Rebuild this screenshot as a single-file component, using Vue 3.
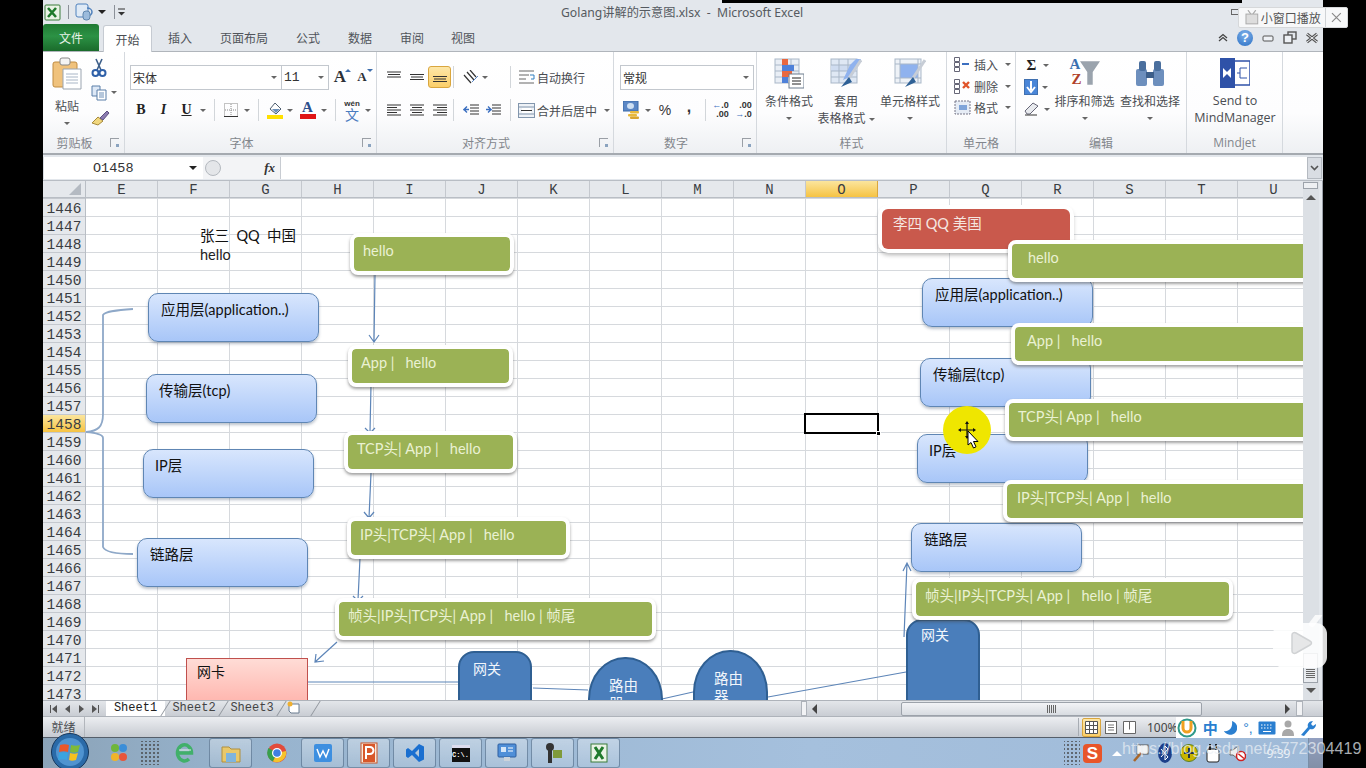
<script setup>
const docTitle = 'Golang讲解的示意图.xlsx  -  Microsoft Excel'
const noteTitle = '张三  QQ  中国'
const cols = ['E','F','G','H','I','J','K','L','M','N','O','P','Q','R','S','T','U']
const rows = Array.from({ length: 28 }, (_, i) => 1446 + i)
const tabs = [
  { t: '插入', w: 56 }, { t: '页面布局', w: 72 }, { t: '公式', w: 56 },
  { t: '数据', w: 48 }, { t: '审阅', w: 56 }, { t: '视图', w: 46 }
]
const layers = [
  { t: '应用层(application..)', x: 148, y: 293, px: 12 },
  { t: '传输层(tcp)', x: 146, y: 374, px: 12 },
  { t: 'IP层', x: 143, y: 449, px: 11 },
  { t: '链路层', x: 137, y: 538, px: 12 },
  { t: '应用层(application..)', x: 922, y: 278, px: 12 },
  { t: '传输层(tcp)', x: 920, y: 358, px: 12 },
  { t: 'IP层', x: 917, y: 434, px: 11 },
  { t: '链路层', x: 911, y: 523, px: 12 }
]
const greens = [
  { t: 'hello', x: 354, y: 237, w: 156, p: 9 },
  { t: 'App |   hello', x: 352, y: 349, w: 157, p: 9 },
  { t: 'TCP头| App |   hello', x: 348, y: 435, w: 165, p: 9 },
  { t: 'IP头|TCP头| App |   hello', x: 351, y: 521, w: 215, p: 9 },
  { t: '帧头|IP头|TCP头| App |   hello | 帧尾', x: 339, y: 602, w: 313, p: 9 },
  { t: 'hello', x: 1012, y: 244, w: 320, p: 16 },
  { t: 'App |   hello', x: 1015, y: 327, w: 320, p: 12 },
  { t: 'TCP头| App |   hello', x: 1009, y: 403, w: 320, p: 9 },
  { t: 'IP头|TCP头| App |   hello', x: 1007, y: 484, w: 320, p: 10 },
  { t: '帧头|IP头|TCP头| App |   hello | 帧尾', x: 916, y: 582, w: 313, p: 9 }
]
const place = (x, y, w, h) => ({
  left: x - 86 + 'px', top: y - 198 + 'px',
  ...(w ? { width: w + 'px' } : {}), ...(h ? { height: h + 'px' } : {})
})
const greenBox = g => ({ ...place(g.x - 4, g.y - 4, g.w + 8), paddingLeft: g.p + 'px' })
</script>

<template>
  <div class="screen">
    <div class="win">
      <!-- title bar -->
      <div class="titlebar">
        <div class="qat">
          <svg width="18" height="17" viewBox="0 0 18 17"><rect x="1" y="1" width="15" height="15" rx="1" fill="#eaf3e6" stroke="#3a7d3a"/><path d="M4 4l8 9M12 4l-8 9" stroke="#1f7a2c" stroke-width="2.6"/></svg>
          <i class="qsep"></i>
          <svg width="20" height="18" viewBox="0 0 20 18"><rect x="1" y="1" width="12" height="13" rx="2" fill="#dfeaf6" stroke="#4f81bd"/><path d="M12 5c3 0 5 2 5 4s-2 4-4 4" fill="none" stroke="#4f81bd" stroke-width="1.5"/><rect x="8" y="8" width="7" height="9" rx="3" fill="#9bbbdc" stroke="#5f86ad"/></svg>
          <i class="caret dark"></i>
          <i class="qsep qs2"></i>
          <svg width="8" height="8" viewBox="0 0 8 8"><path d="M0 1h7" stroke="#333"/><path d="M0 4h7l-3.500 3.500z" fill="#333"/></svg>
        </div>
        <div class="doc-title">{{ docTitle }}</div>
        <div class="win-ctl"><i class="wc wc1"></i><i class="wc wc2"></i><i class="wc wc3"></i></div>
      </div>
      <!-- tabs -->
      <div class="tabbar">
        <div class="tab-file">文件</div>
        <div class="tab-home">开始</div>
        <div v-for="t in tabs" :key="t.t" class="tab" :style="{ width: t.w + 'px' }">{{ t.t }}</div>
        <div class="help">
          <svg width="12" height="10" viewBox="0 0 12 10"><path d="M2 8l4-3.500 4 3.500M2 5l4-3.500L10 5" fill="none" stroke="#444" stroke-width="1.300"/></svg>
          <span class="q">?</span>
          <svg width="14" height="10" viewBox="0 0 14 10"><rect x="2" y="3" width="10" height="5" rx="1" fill="#eef1f5" stroke="#555"/></svg>
          <svg width="14" height="13" viewBox="0 0 14 13"><rect x="5" y="1" width="8" height="7" fill="none" stroke="#555" stroke-width="1.400"/><rect x="1" y="4" width="8" height="8" fill="#eef1f5" stroke="#555" stroke-width="1.400"/></svg>
          <svg width="14" height="12" viewBox="0 0 14 12"><path d="M2 2l10 8M12 2L2 10" stroke="#555" stroke-width="3"/><path d="M2 2l10 8M12 2L2 10" stroke="#eef1f5" stroke-width="1"/></svg>
        </div>
      </div>
      <!-- ribbon -->
      <div class="ribbon">
        <section class="group g-clip">
          <div class="body clip-body">
            <div class="big paste">
              <svg width="30" height="33" viewBox="0 0 30 33"><rect x="1" y="5" width="24" height="25" rx="2" fill="#f0c27c" stroke="#c08c40"/><rect x="8" y="1" width="10" height="7" rx="2" fill="#f4f4f4" stroke="#888"/><path d="M11 12h18v20H11z" fill="#fff" stroke="#9aa4b0"/><path d="M14 17h12M14 20h12M14 23h12M14 26h12" stroke="#a9b6c6"/></svg>
              <span class="bl pastelabel">粘贴</span>
              <i class="caret pc"></i>
            </div>
            <div class="clip-tools">
              <div class="clip-t">
                <svg width="16" height="20" viewBox="0 0 16 20"><path d="M5 1l5 11M11 1L6 12" stroke="#3d5f8a" stroke-width="1.600"/><circle cx="4.500" cy="15" r="3" fill="none" stroke="#2f60a8" stroke-width="2"/><circle cx="11.500" cy="15" r="3" fill="none" stroke="#2f60a8" stroke-width="2"/></svg>
              </div>
              <div class="clip-t">
                <svg width="17" height="16" viewBox="0 0 17 16"><path d="M1 1h8v10H1z" fill="#dde8f6" stroke="#5a7fa8"/><path d="M6 5h9v10H6z" fill="#fff" stroke="#5a7fa8"/><path d="M8 8h5M8 10h5M8 12h5" stroke="#6d8fb8"/></svg>
                <i class="caret"></i>
              </div>
              <div class="clip-t">
                <svg width="19" height="16" viewBox="0 0 19 16"><path d="M1 13l6-6 5 4-5 4z" fill="#f1d77e" stroke="#a78a3a"/><path d="M9 8l7-7 2 2-6 7z" fill="#8b7bb0" stroke="#5d5080"/></svg>
              </div>
            </div>
          </div>
          <div class="glabel offs">剪贴板<i class="launch"></i></div>
        </section>

        <section class="group g-font">
          <div class="body two">
            <div class="row">
              <div class="combo fname"><span>宋体</span><i class="caret"></i></div>
              <div class="combo fsize"><span class="num">11</span><i class="caret"></i></div>
              <div class="tool grow"><b class="serif-a big-a">A</b><i class="mini up"></i></div>
              <div class="tool grow2"><b class="serif-a small-a">A</b><i class="mini down"></i></div>
            </div>
            <div class="row">
              <div class="tool w22"><b class="serif-b">B</b></div>
              <div class="tool w23"><i class="serif-b">I</i></div>
              <div class="tool w23"><u class="serif-b">U</u></div>
              <div class="cw"><i class="caret"></i></div>
              <i class="sep"></i>
              <div class="tool w22">
                <svg width="14" height="14" viewBox="0 0 14 14"><rect x=".5" y=".5" width="13" height="13" fill="none" stroke="#888" stroke-dasharray="1 1"/><path d="M7 1v12M1 7h12" stroke="#888" stroke-dasharray="1 1"/><path d="M0 13.500h14" stroke="#333"/></svg>
              </div>
              <div class="cw"><i class="caret"></i></div>
              <i class="sep"></i>
              <div class="tool w22">
                <svg width="17" height="18" viewBox="0 0 17 18"><path d="M3 8l5-6 6 6-5 5z" fill="#fff" stroke="#4f5f70"/><path d="M5 8h8l-4 4z" fill="#6d8fb8"/><rect x="0" y="14" width="16" height="4" fill="#ffe000"/></svg>
              </div>
              <div class="cw cw2"><i class="caret"></i></div>
              <div class="tool w22 fcolor">
                <svg width="16" height="18" viewBox="0 0 16 18"><rect x="0" y="13" width="16" height="5" fill="#e01515"/></svg>
                <b class="fa">A</b>
              </div>
              <div class="cw"><i class="caret"></i></div>
              <i class="sep"></i>
              <div class="tool w22 wen"><span class="wen-t">wén</span><span class="wen-c">文</span></div>
              <div class="cw"><i class="caret"></i></div>
            </div>
          </div>
          <div class="glabel offs">字体<i class="launch"></i></div>
        </section>

        <section class="group g-align">
          <div class="body two">
            <div class="row">
              <div class="tool w23"><svg width="14" height="12" viewBox="0 0 14 12"><path d="M0 1h14M1 3.500h12M0 6h14" stroke="#333"/></svg></div>
              <div class="tool w23"><svg width="14" height="12" viewBox="0 0 14 12"><path d="M0 3.500h14M1 6h12M0 8.500h14" stroke="#333"/></svg></div>
              <div class="tool w23 active"><svg width="14" height="12" viewBox="0 0 14 12"><path d="M0 5.500h14M1 8h12M0 10.500h14" stroke="#333"/></svg></div>
              <i class="sep s6"></i>
              <div class="tool orient">
                <svg width="17" height="14" viewBox="0 0 17 14"><path d="M1 5l7 8M4 2l7 8M7 0l6 7" stroke="#333" stroke-width="1.200"/><path d="M9 12l6-6" stroke="#5b87c5"/></svg>
                <i class="caret"></i>
              </div>
              <i class="sep"></i>
              <div class="tool label-t">
                <svg width="17" height="15" viewBox="0 0 17 15"><path d="M1 1h15M1 5h10M1 9h7M1 13h15" stroke="#666"/><path d="M12 5h4v4h-3" fill="none" stroke="#2f7fbf"/></svg>
                <span>自动换行</span>
              </div>
            </div>
            <div class="row">
              <div class="tool w23"><svg width="14" height="12" viewBox="0 0 14 12"><path d="M0 1h14M0 3.500h10M0 6h14M0 8.500h10M0 11h14" stroke="#333"/></svg></div>
              <div class="tool w23"><svg width="14" height="12" viewBox="0 0 14 12"><path d="M0 1h14M2 3.500h10M0 6h14M2 8.500h10M0 11h14" stroke="#333"/></svg></div>
              <div class="tool w23"><svg width="14" height="12" viewBox="0 0 14 12"><path d="M0 1h14M4 3.500h10M0 6h14M4 8.500h10M0 11h14" stroke="#333"/></svg></div>
              <i class="sep s6"></i>
              <div class="tool w22 ind1"><svg width="16" height="13" viewBox="0 0 16 13"><path d="M7 1h9M7 4h9M7 7h9M7 10h9" stroke="#333"/><path d="M6 5.500H1l3-3M1 5.500l3 3" fill="none" stroke="#3b6fc0" stroke-width="1.400"/></svg></div>
              <div class="tool w22"><svg width="16" height="13" viewBox="0 0 16 13"><path d="M7 1h9M7 4h9M7 7h9M7 10h9" stroke="#333"/><path d="M1 5.500h5l-3-3M6 5.500l-3 3" fill="none" stroke="#3b6fc0" stroke-width="1.400"/></svg></div>
              <i class="sep"></i>
              <div class="tool label-t">
                <svg width="17" height="15" viewBox="0 0 17 15"><rect x=".5" y=".5" width="16" height="14" fill="#eef2f7" stroke="#8296ad"/><path d="M1 4h15M1 11h15" stroke="#8296ad"/><rect x="4" y="5" width="9" height="5" fill="#fff"/><path d="M3 7.500h11" stroke="#333"/></svg>
                <span>合并后居中</span>
                <i class="caret c7"></i>
              </div>
            </div>
          </div>
          <div class="glabel offs">对齐方式<i class="launch"></i></div>
        </section>

        <section class="group g-num">
          <div class="body two">
            <div class="row"><div class="combo fnum"><span>常规</span><i class="caret"></i></div></div>
            <div class="row">
              <div class="tool w22 first">
                <svg width="18" height="18" viewBox="0 0 18 18"><rect x="0" y="0" width="15" height="10" fill="#5b87c5" stroke="#3c6ba8"/><ellipse cx="7.500" cy="5" rx="3.500" ry="3" fill="#cfe0f3"/><rect x="7" y="10" width="9" height="2.500" rx="1" fill="#e8b93a"/><rect x="5" y="13" width="9" height="2.500" rx="1" fill="#e8b93a"/><rect x="7" y="15.500" width="9" height="2.500" rx="1" fill="#d9a52e"/></svg>
              </div>
              <div class="cw"><i class="caret"></i></div>
              <div class="tool w24 sym">%</div>
              <div class="tool w24 sym comma">,</div>
              <i class="sep s8"></i>
              <div class="tool w23">
                <div class="dec"><span><em>←</em>.0</span><span>.00</span></div>
              </div>
              <div class="tool w23">
                <div class="dec"><span>.00</span><span><em>→</em>.0</span></div>
              </div>
            </div>
          </div>
          <div class="glabel offs">数字<i class="launch"></i></div>
        </section>

        <section class="group g-style">
          <div class="body bigrow">
            <div class="big w54">
              <svg width="30" height="30" viewBox="0 0 30 30"><rect x="1" y="1" width="24" height="24" fill="#e9eef5" stroke="#a9b7c8"/><path d="M9 1v24M17 1v24M1 7h24M1 13h24M1 19h24" stroke="#a9b7c8"/><rect x="8" y="1" width="6" height="6" fill="#e9683f"/><rect x="8" y="7" width="12" height="6" fill="#4f81d9"/><rect x="8" y="13" width="10" height="6" fill="#e9683f"/><rect x="8" y="19" width="6" height="6" fill="#4f81d9"/><rect x="15" y="16" width="15" height="14" fill="#fff" stroke="#6d7c8e"/><path d="M18 20h9M18 23h9M18 26h9" stroke="#222"/></svg>
              <span class="bl">条件格式</span><i class="caret pc"></i>
            </div>
            <div class="big w60">
              <svg width="32" height="30" viewBox="0 0 32 30"><rect x="1" y="1" width="26" height="24" fill="#dfe8f4" stroke="#a9b7c8"/><rect x="1" y="7" width="26" height="6" fill="#cfdcf0"/><path d="M9 1v24M18 1v24M1 7h26M1 13h26M1 19h26" stroke="#a9b7c8"/><path d="M20 7l6-6h5l-9 17-9 4z" fill="#8fb2ee"/><path d="M31 2L19 20" stroke="#c7cdd6" stroke-width="3"/><path d="M19 19l-8 10 11-5z" fill="#2f6196"/></svg>
              <span class="bl">套用</span><span class="bl nowrap">表格格式<i class="caret in"></i></span>
            </div>
            <div class="big w68">
              <svg width="32" height="30" viewBox="0 0 32 30"><rect x="1" y="1" width="26" height="24" fill="#eef2f7" stroke="#a9b7c8"/><rect x="6" y="6" width="18" height="14" fill="#8fb2ee"/><path d="M1 6h26M6 1v24M24 1v24M1 20h26" stroke="#a9b7c8"/><path d="M31 2L19 20" stroke="#c7cdd6" stroke-width="3"/><path d="M19 19l-8 10 11-5z" fill="#2f6196"/></svg>
              <span class="bl">单元格样式</span><i class="caret pc"></i>
            </div>
          </div>
          <div class="glabel">样式</div>
        </section>

        <section class="group g-cells">
          <div class="body cells">
            <div class="cell-row">
              <svg width="17" height="15" viewBox="0 0 17 15"><path d="M.5.5h5v4h-5zM.5 5.500h5v4h-5zM.5 10.500h5v4h-5z" fill="#fff" stroke="#667"/><path d="M8 7h7" stroke="#3c6fc0" stroke-width="2"/></svg>
              <span>插入</span><i class="caret"></i>
            </div>
            <div class="cell-row">
              <svg width="17" height="15" viewBox="0 0 17 15"><path d="M.5.5h5v4h-5zM.5 5.500h5v4h-5zM.5 10.500h5v4h-5z" fill="#fff" stroke="#667"/><path d="M9 3l6 6M15 3L9 9" stroke="#e0552a" stroke-width="2.400"/></svg>
              <span>删除</span><i class="caret"></i>
            </div>
            <div class="cell-row">
              <svg width="17" height="15" viewBox="0 0 17 15"><rect x="1" y="1" width="15" height="13" fill="#e6ecf5" stroke="#778" stroke-dasharray="2 1"/><rect x="5" y="5" width="8" height="5" fill="#7fa4d9"/></svg>
              <span>格式</span><i class="caret"></i>
            </div>
          </div>
          <div class="glabel">单元格</div>
        </section>

        <section class="group g-edit">
          <div class="body bigrow">
            <div class="edit-col">
              <div class="ed"><span class="sigma">Σ</span><i class="caret"></i></div>
              <div class="ed"><svg width="14" height="16" viewBox="0 0 14 16"><rect x=".5" y=".5" width="13" height="15" fill="#4a86d8" stroke="#4070b0"/><path d="M7 2v9M3 8l4 5 4-5" fill="none" stroke="#fff" stroke-width="2"/></svg><i class="caret"></i></div>
              <div class="ed"><svg width="16" height="14" viewBox="0 0 16 14"><path d="M1 9l8-8 5 3-8 8H3z" fill="#e8eaee" stroke="#667"/><path d="M1 13h12" stroke="#333"/></svg><i class="caret"></i></div>
            </div>
            <div class="big w57">
              <div class="sortico">
                <span class="az a">A</span><span class="az z">Z</span>
                <svg width="20" height="24" viewBox="0 0 22 26"><path d="M0 0h22l-8 12v14h-6V12z" fill="#9aa3ad"/></svg>
              </div>
              <span class="bl">排序和筛选</span><i class="caret pc"></i>
            </div>
            <div class="big w60 ml5">
              <svg width="28" height="28" viewBox="0 0 28 28"><rect x="0" y="10" width="11" height="17" rx="2" fill="#6d8fbd"/><rect x="17" y="10" width="11" height="17" rx="2" fill="#6d8fbd"/><rect x="10" y="13" width="8" height="6" fill="#3d5f8a"/><rect x="3" y="2" width="7" height="10" rx="2" fill="#4a6f9e"/><rect x="18" y="2" width="7" height="10" rx="2" fill="#4a6f9e"/></svg>
              <span class="bl">查找和选择</span><i class="caret pc"></i>
            </div>
          </div>
          <div class="glabel">编辑</div>
        </section>

        <section class="group g-mind">
          <div class="body bigrow">
            <div class="big w96">
              <svg width="30" height="30" viewBox="0 0 30 30"><rect x="14" y="3" width="16" height="24" fill="#fff" stroke="#2f52a8" stroke-width="1.500"/><rect x="0" y="0" width="15" height="30" fill="#2f52a8"/><path d="M3 10l4 4 4-4v10l-4-4-4 4z" fill="#fff"/><path d="M17 15h3M20 10v10M20 10h7M20 20h7" stroke="#2f52a8"/></svg>
              <span class="bl lat">Send to</span><span class="bl lat">MindManager</span>
            </div>
          </div>
          <div class="glabel lat">Mindjet</div>
        </section>
      </div>
      <!-- formula bar -->
      <div class="fbar">
        <div class="namebox"><span>O1458</span><i class="caret dark"></i></div>
        <div class="fx-wrap"><i class="dot"></i><i class="fx">fx</i></div>
        <div class="finput"></div>
        <div class="fexp"><svg width="9" height="6" viewBox="0 0 9 6"><path d="M1 1l3.500 3.500L8 1" fill="none" stroke="#555" stroke-width="1.600"/></svg></div>
      </div>
      <!-- sheet -->
      <div class="sheet">
        <div class="sheet-main">
          <div class="colhead">
            <div class="corner"><svg width="12" height="12" viewBox="0 0 12 12"><path d="M12 0v12H0z" fill="#b4bac2"/></svg></div>
            <div v-for="c in cols" :key="c" class="ch" :class="{ on: c === 'O' }">{{ c }}</div>
          </div>
          <div class="gridwrap">
            <div class="rowhead">
              <div v-for="r in rows" :key="r" class="rh" :class="{ on: r === 1458 }">{{ r }}</div>
            </div>
            <div class="canvas">
              <svg class="wires" width="1217" height="502" viewBox="86 198 1217 502">
                <g fill="none" stroke="#5d85b8" stroke-width="1.200">
                  <path d="M375 274L374 342M369 335l5 7 5-7"/>
                  <path d="M371 385L370 432M365 428l5 5 5-5"/>
                  <path d="M371 473L369 518M364 512l5 6 5-6"/>
                  <path d="M360 558L358 600M353 596l5 5 5-5"/>
                  <path d="M337 642L315 662M316 654l-1 8 9-1"/>
                  <path d="M308 682H458"/>
                  <path d="M533 688L588 690"/>
                  <path d="M662 699L693 692"/>
                  <path d="M768 697L906 672"/>
                  <path d="M904 637L907 563M903 571l4-8 4 8"/>
                </g>
                <path d="M133 309C118 310 105 311 103 315V414C103 427 98 431 86 432C98 433 103 435 103 438V547C105 552 118 554 133 554" fill="none" stroke="#8ea8c8" stroke-width="1.800"/>
              </svg>
              <div class="note1"><div>{{ noteTitle }}</div><span>hello</span></div>
              <div class="cell-sel" :style="place(804, 413, 75, 21)"><i></i></div>
              <div class="red" :style="place(882, 209, 188, 40)">李四 QQ 美国</div>
              <div class="nic" :style="place(186, 658, 122, 60)">网卡</div>
              <div class="gw gw-l" :style="place(458, 651, 74, 70)">网关</div>
              <div class="router" :style="place(588, 657, 75, 90)">路由<br />器</div>
              <div class="router" :style="place(693, 650, 75, 90)">路由<br />器</div>
              <div class="gw" :style="place(906, 619, 74, 100)">网关</div>
              <div v-for="(b, i) in layers" :key="i" class="layer" :style="place(b.x, b.y)">
                <span :style="{ paddingLeft: b.px + 'px' }">{{ b.t }}</span>
              </div>
              <div v-for="(g, i) in greens" :key="i" class="green" :style="greenBox(g)">{{ g.t }}</div>
              <div class="spot" :style="place(943, 406)">
                <svg width="48" height="48" viewBox="0 0 48 48"><circle cx="24" cy="24" r="24" fill="#efe600"/><path d="M24 16.500v15M16.500 24h15" stroke="#111" stroke-width="1.200"/><path d="M22 18l2-3 2 3zM22 30l2 3 2-3zM18 22l-3 2 3 2zM30 22l3 2-3 2z" fill="#111"/><path d="M25 25v14l3-2.500 2.500 5.500 2.500-1.200-2.500-5.300H35z" fill="#fff" stroke="#000"/></svg>
              </div>
            </div>
          </div>
        </div>
        <div class="vscroll">
          <i class="split-h"></i>
          <i class="arr up"></i>
          <div class="vthumb"><span></span></div>
          <i class="arr down"></i>
        </div>
      </div>
      <!-- sheet tabs -->
      <div class="tabs-row">
        <div class="nav">
          <i class="nv nl"></i><i class="nv l"></i><i class="nv r"></i><i class="nv nr"></i>
        </div>
        <div class="stab on">Sheet1</div>
        <div class="stab">Sheet2</div>
        <div class="stab">Sheet3</div>
        <div class="stab newsheet">
          <svg width="15" height="15" viewBox="0 0 15 15"><path d="M3 3h10v9H5l-2-2z" fill="#fff" stroke="#6b7d90"/><circle cx="4" cy="3" r="2.500" fill="#f0b030"/></svg>
        </div>
        <div class="splitter"></div>
        <div class="hscroll">
          <i class="harr l"></i>
          <div class="hthumb"><span></span></div>
          <i class="harr r"></i>
          <div class="hbox"></div>
        </div>
      </div>
      <!-- status -->
      <div class="status">
        <span class="ready">就绪</span>
        <div class="views">
          <i class="vsep"></i>
          <div class="vb on"><svg width="13" height="13" viewBox="0 0 13 13"><path d="M.5.5h12v12H.5zM4.500.5v12M8.500.5v12M.5 4.500h12M.5 8.500h12" fill="#fff" stroke="#555"/></svg></div>
          <div class="vb"><svg width="12" height="13" viewBox="0 0 12 13"><rect x=".5" y=".5" width="11" height="12" fill="#fff" stroke="#666"/><path d="M3 4h6M3 6.500h6M3 9h6" stroke="#777"/></svg></div>
          <div class="vb"><svg width="13" height="13" viewBox="0 0 13 13"><path d="M.5.5h12v12H.5zM6.500.5v8" fill="#fff" stroke="#666"/></svg></div>
          <span class="zoom">100%</span>
        </div>
      </div>
      <!-- taskbar -->
      <div class="taskbar">
        <div class="orbcell">
          <svg width="38" height="38" viewBox="0 0 38 38">
            <circle cx="19" cy="19" r="18.500" fill="#2a6aa8" stroke="#16375c"/>
            <circle cx="19" cy="19" r="14" fill="#4f93d0"/>
            <path d="M9 12c3-1 6-1 9 0l-1 7c-3-1-6-1-9 0z" fill="#e9572b"/>
            <path d="M20 12c3 1 6 1 9 0l-2 7c-3 1-6 1-8 0z" fill="#7fba3a"/>
            <path d="M8 20c3-1 6-1 9 0l-1 7c-3-1-6-1-9 0z" fill="#3aa4e0"/>
            <path d="M19 20c3 1 6 1 8 0l-2 7c-3 1-5 1-7 0z" fill="#f6c11f"/>
          </svg>
        </div>
        <div class="tb-ic w43">
          <svg width="18" height="20" viewBox="0 0 18 20"><circle cx="5" cy="5" r="4" fill="#6fb63a"/><circle cx="13" cy="5" r="4" fill="#3b8ed8"/><circle cx="5" cy="14" r="4" fill="#f0b428"/><circle cx="13" cy="14" r="4" fill="#e8553a"/></svg>
        </div>
        <div class="grip"></div>
        <div class="tb-ic ie">
          <svg width="20" height="22" viewBox="0 0 20 22"><path d="M3 11h13.500a7 8 0 1 0-2.500 6" fill="none" stroke="#41b06a" stroke-width="3.500"/><path d="M4 8h12" stroke="#dff3e6" stroke-width="1"/></svg>
        </div>
        <div class="tb-btns">
          <div class="tb-btn"><svg width="20" height="20" viewBox="0 0 20 20"><path d="M1 4h7l2 2h9v13H1z" fill="#e9c86a" stroke="#b08f3e"/><rect x="5" y="10" width="10" height="9" fill="#7fb4de"/></svg></div>
          <div class="tb-btn plain"><svg width="20" height="20" viewBox="0 0 20 20"><circle cx="10" cy="10" r="9.500" fill="#e24b3b"/><path d="M10 10L1.500 5A9.500 9.500 0 0 0 6 18.500z" fill="#37a04d"/><path d="M10 10l-4 8.500A9.500 9.500 0 0 0 19 8z" fill="#f5c32c"/><circle cx="10" cy="10" r="5" fill="#fff"/><circle cx="10" cy="10" r="3.800" fill="#3f7fe0"/></svg></div>
          <div class="tb-btn"><svg width="20" height="20" viewBox="0 0 20 20"><rect x="1" y="1" width="18" height="18" rx="2" fill="#3d8fe0"/><path d="M4 6l3 8 3-6 3 6 3-8" fill="none" stroke="#fff" stroke-width="1.500"/></svg></div>
          <div class="tb-btn"><svg width="18" height="22" viewBox="0 0 18 22"><rect x="1" y="1" width="16" height="20" fill="#f6e9dc" stroke="#c8552a"/><rect x="3" y="2" width="12" height="18" fill="#d8572a"/><path d="M6 17V5h4a3 3 0 0 1 0 7H6" fill="none" stroke="#fff" stroke-width="2"/></svg></div>
          <div class="tb-btn"><svg width="20" height="20" viewBox="0 0 20 20"><path d="M14 1l5 2.500v13L14 19 7 12l-4 3-2-1.500V6.500L3 5l4 3zM14 6l-4 4 4 4z" fill="#1a6fd0" fill-rule="evenodd"/></svg></div>
          <div class="tb-btn"><div class="cmd"><span>C:\.</span></div></div>
          <div class="tb-btn"><svg width="20" height="20" viewBox="0 0 20 20"><rect x="1" y="1" width="18" height="13" rx="1" fill="#4f8fd8" stroke="#2f5f9f"/><rect x="4" y="4" width="5" height="5" fill="#d5e6f8"/><path d="M11 5h5M11 8h5" stroke="#fff"/><rect x="7" y="14" width="6" height="4" fill="#ccd3da"/></svg></div>
          <div class="tb-btn"><svg width="20" height="22" viewBox="0 0 20 22"><circle cx="7" cy="5" r="4" fill="#333"/><rect x="5" y="8" width="4" height="13" fill="#333"/><rect x="10" y="8" width="9" height="8" fill="#7f9a3a"/></svg></div>
          <div class="tb-btn"><svg width="18" height="20" viewBox="0 0 18 20"><rect x="1" y="1" width="16" height="18" fill="#eaf3e6" stroke="#3a7d3a"/><path d="M5 4l8 12M13 4L5 16" stroke="#1f7a2c" stroke-width="3"/></svg></div>
        </div>
        <div class="tray">
          <div class="grip g2"></div>
          <div class="sogou">S</div>
          <div class="tri"></div>
          <div class="ti"><svg width="16" height="18" viewBox="0 0 16 18"><rect x="4" y="1" width="11" height="9" fill="#f4f4f4" stroke="#555"/><path d="M1 17l7-8" stroke="#a8662a" stroke-width="2.500"/></svg></div>
          <div class="ti"><svg width="14" height="20" viewBox="0 0 14 20"><ellipse cx="7" cy="10" rx="7" ry="10" fill="#1c3f8a"/><path d="M3 6l7 8-3 3V3l3 3-7 8" fill="none" stroke="#fff"/></svg></div>
          <div class="ti"><svg width="18" height="18" viewBox="0 0 18 18"><circle cx="9" cy="9" r="8.500" fill="#c8b400" stroke="#5a7f20"/><path d="M9 4v10M4 9h10" stroke="#234" stroke-width="2"/></svg></div>
          <div class="ti"><svg width="16" height="20" viewBox="0 0 16 20"><rect x="2" y="6" width="12" height="13" rx="2" fill="#fff" stroke="#222"/><path d="M5 1v6M11 1v6" stroke="#222" stroke-width="2"/></svg></div>
          <div class="ti"><svg width="18" height="18" viewBox="0 0 18 18"><path d="M2 6h3l5-4v13l-5-4H2z" fill="#eee" stroke="#666"/><circle cx="13" cy="12" r="4.500" fill="#fff" stroke="#d02020" stroke-width="1.500"/><path d="M10 9.500l6 5" stroke="#d02020" stroke-width="1.500"/></svg></div>
          <div class="clock">9:39</div>
          <div class="desk"></div>
        </div>
      </div>
    </div>

    <!-- overlays -->
    <div class="topline"></div>
    <div class="mini-play">
      <svg width="14" height="15" viewBox="0 0 14 15"><path d="M3 0l3 4M11 0L8 4" stroke="#aaa" stroke-width="1.200"/><rect x="1" y="4" width="12" height="10" fill="#ddd" stroke="#aaa"/></svg>
      <span>小窗口播放</span>
      <i class="mp-sep"></i>
      <svg width="11" height="11" viewBox="0 0 11 11"><path d="M1 1l9 9M10 1l-9 9" stroke="#888" stroke-width="1.200"/></svg>
    </div>
    <div class="ime">
      <svg width="20" height="20" viewBox="0 0 20 20"><circle cx="10" cy="10" r="8.500" fill="#fff" stroke="#2f9a8a" stroke-width="2"/><path d="M6 3v7a4 4 0 0 0 8 0V3" fill="none" stroke="#f0a020" stroke-width="3"/></svg>
      <span class="zh">中</span>
      <svg width="14" height="16" viewBox="0 0 14 16"><path d="M9 1a7 7 0 1 1-8 10c5 1 9-3 8-10z" fill="#2a7fd0"/></svg>
      <span class="pt">°,</span>
      <svg width="18" height="14" viewBox="0 0 18 14"><rect x=".5" y=".5" width="17" height="13" rx="1" fill="#2a7fd0"/><path d="M3 4h12M3 7h12" stroke="#fff" stroke-dasharray="1.500 1.500"/><path d="M5 10.500h8" stroke="#fff"/></svg>
      <svg width="12" height="16" viewBox="0 0 12 16"><circle cx="6" cy="4" r="3.500" fill="#a8a8a8"/><path d="M0 16c0-5 2-7 6-7s6 2 6 7z" fill="#a8a8a8"/></svg>
      <svg width="16" height="16" viewBox="0 0 16 16"><path d="M1 15l7-8c-1-3 1-6 5-6l-2 3 2 2 3-2c0 4-3 6-6 5l-6 7z" fill="#2a7fd0"/></svg>
    </div>
    <div class="bili">
      <svg width="56" height="54" viewBox="0 0 56 54">
        <path d="M16 9L9 0M40 9l7-9" stroke="#fff" stroke-opacity=".8" stroke-width="6" stroke-linecap="round"/>
        <rect x="1" y="8" width="54" height="45" rx="11" fill="#fff" fill-opacity=".86"/>
        <path d="M20 20c0-2 2-3 4-2l14 8c2 1 2 3 0 4l-14 8c-2 1-4 0-4-2z" fill="#e6e7e8" stroke="#d0d2d4" stroke-width="1.500"/>
      </svg>
    </div>
    <div class="wm">https://blog.csdn.net/a772304419</div>
  </div>
</template>

<style>
html, body { margin: 0; background: #000; }
</style>

<style scoped>
.screen {
  position: relative; width: 1366px; height: 768px; overflow: hidden; background: #000;
  display: flex; justify-content: center;
  font-family: "Noto Sans CJK SC", "Noto Sans", sans-serif; font-size: 12px; color: #4a4d52;
}
.win { width: 1280px; height: 768px; display: flex; flex-direction: column; background: #e3e7ec; }
i { font-style: normal; }
.caret { display: inline-block; width: 0; height: 0; border-left: 3px solid transparent; border-right: 3px solid transparent; border-top: 3px solid #666; flex: none; }
.caret.dark { border-top-color: #222; border-left-width: 4px; border-right-width: 4px; border-top-width: 4px; }

.titlebar { height: 24px; display: flex; align-items: center; flex: none; }
.qat { width: 518px; display: flex; align-items: center; padding-left: 1px; box-sizing: border-box; height: 24px; gap: 3px; flex: none; }
.qsep { width: 1px; height: 14px; background: #8b9098; margin: 0 3px 0 3px; }
.qs2 { margin-left: 5px; margin-right: 0; }
.doc-title { white-space: pre; font-family: "Noto Sans", "Noto Sans CJK SC", sans-serif; font-size: 12.200px; color: #555a60; margin-top: -1px; width: 640px; flex: none; }
.win-ctl { display: flex; gap: 12px; margin-left: 30px; align-items: center; }
.wc { width: 8px; height: 4px; border: 1px solid #666; }

.tabbar { height: 27px; display: flex; align-items: flex-end; flex: none; border-bottom: 1px solid #b0b5bb; box-sizing: content-box; }
.tab-file { width: 56px; height: 27px; border-radius: 3px 3px 0 0; background: linear-gradient(#207a33, #2c9245 45%, #1a6b2b); color: #e8f3e8; display: flex; align-items: center; justify-content: center; }
.tab-home { width: 49px; margin-left: 4px; background: #fff; border: 1px solid #c6cbd2; border-bottom: 0; border-radius: 3px 3px 0 0; box-sizing: border-box; display: flex; align-items: center; justify-content: center; margin-bottom: -1px; height: 27px; }
.tab { height: 27px; display: flex; align-items: center; justify-content: center; color: #50545a; }
.help { margin-left: auto; display: flex; align-items: center; gap: 8px; height: 27px; padding-right: 4px; }
.q { width: 16px; height: 16px; border-radius: 50%; background: radial-gradient(circle at 50% 30%, #7fb2ea, #2a6fc4); color: #fff; font: bold 13px/16px "Liberation Sans", sans-serif; text-align: center; }

.ribbon { height: 101px; display: flex; flex: none; background: linear-gradient(#fff 0, #fdfdfe 60%, #eef0f3 100%); border-bottom: 2px solid #a5aab0; box-sizing: content-box; }
.group { display: flex; flex-direction: column; border-right: 1px solid #d5d9de; box-sizing: border-box; height: 101px; flex: none; }
.body { flex: 1; min-height: 0; box-sizing: border-box; }
.glabel { position: relative; height: 20px; line-height: 20px; text-align: center; color: #82868c; flex: none; }
.glabel.offs { padding-right: 18px; box-sizing: border-box; }
.launch { position: absolute; right: 5px; top: 5px; width: 8px; height: 8px; border-left: 1px solid #9a9fa6; border-top: 1px solid #9a9fa6; }
.launch::after { content: ""; position: absolute; right: 0; bottom: 0; width: 3px; height: 3px; background: #8aa3bf; }

.g-clip { width: 82px; }
.g-font { width: 252px; }
.g-align { width: 237px; }
.g-num { width: 143px; }
.g-style { width: 190px; }
.g-cells { width: 69px; }
.g-edit { width: 171px; }
.g-mind { width: 96px; }

.two { display: flex; flex-direction: column; gap: 7px; padding: 12px 0 0 5px; }
.row { display: flex; align-items: center; height: 26px; }
.combo { height: 25px; border: 1px solid #c3c8ce; background: #fff; box-sizing: border-box; display: flex; align-items: center; justify-content: space-between; padding: 0 4px 0 2px; color: #333; font-size: 12px; }
.fname { width: 152px; }
.fsize { width: 47px; border-left: 0; }
.fnum { width: 134px; margin-left: 1px; }
.num { font-family: "Liberation Mono", monospace; font-size: 13px; }
.tool { display: flex; align-items: center; justify-content: center; height: 22px; flex: none; color: #333; position: relative; }
.w22 { width: 22px; } .w23 { width: 23px; } .w24 { width: 24px; }
.first { margin-left: 2px; }
.cw { width: 10px; display: flex; justify-content: center; flex: none; }
.cw2 { margin-left: -1px; margin-right: 2px; }
.sep { width: 1px; height: 22px; background: #d2d6da; margin: 0 5px 0 6px; flex: none; }
.s6 { margin: 0 3px 0 2px; }
.s8 { margin: 0 3px 0 4px; }
.grow { width: 22px; }
.grow2 { width: 22px; }
.serif-a { font-family: "Liberation Serif", serif; font-weight: bold; color: #2c3036; }
.big-a { font-size: 17px; } .small-a { font-size: 13px; }
.mini { position: absolute; right: 0; top: 3px; width: 0; height: 0; border-left: 3px solid transparent; border-right: 3px solid transparent; }
.mini.up { border-bottom: 3px solid #3f6fad; }
.mini.down { border-top: 3px solid #3f6fad; }
.serif-b { font: bold 14px "Liberation Serif", serif; color: #222; }
i.serif-b { font-style: italic; }
.fcolor .fa { position: absolute; top: 0; left: 5px; font: bold 15px/16px "Liberation Serif", serif; color: #2b4f8c; }
.wen { flex-direction: column; line-height: 1; }
.wen-t { font: bold 8px/8px "Liberation Sans", sans-serif; color: #333; }
.wen-c { font-size: 14px; line-height: 13px; color: #4a7cc0; }

.active { background: linear-gradient(#fde7a8, #fbcf6a); border: 1px solid #d9a63e; border-radius: 3px; box-sizing: border-box; height: 22px; }
.orient { width: 47px; gap: 2px; justify-content: flex-start; padding-left: 6px; box-sizing: border-box; }
.ind1 { margin-left: 3px; }
.label-t { gap: 2px; margin-left: 2px; color: #4a4d52; justify-content: flex-start; }
.c7 { margin-left: 5px; }

.sym { font: 14px "Liberation Sans", sans-serif; color: #333; }
.comma { font-weight: bold; font-size: 16px; padding-bottom: 6px; box-sizing: border-box; }
.dec { display: flex; flex-direction: column; font: bold 9px/9px "Liberation Sans", sans-serif; color: #333; text-align: right; }
.dec em { color: #3b6fc0; font-style: normal; font-size: 9px; }

.bigrow { display: flex; padding-top: 5px; }
.big { display: flex; flex-direction: column; align-items: center; flex: none; }
.big svg { margin-bottom: 4px; height: 32px; flex: none; }
.bl { line-height: 16.500px; color: #4a4d52; white-space: nowrap; }
.big .caret.pc { margin-top: 7px; }
.nowrap { position: relative; }
.in { margin-left: 3px; vertical-align: 2px; }
.w54 { width: 54px; margin-left: 5px; } .w60 { width: 60px; } .w68 { width: 68px; }
.w57 { width: 57px; } .ml5 { margin-left: 7px; } .w96 { width: 96px; }
.lat { font-family: "Open Sans", "Noto Sans", sans-serif; font-size: 12.500px; }
.glabel.lat { font-size: 12px; }

.clip-body { display: flex; padding-top: 5px; }
.paste { width: 48px; }
.paste svg { height: 33px; margin-bottom: 6px; }
.pastelabel { margin-top: 2px; }
.clip-tools { display: flex; flex-direction: column; margin-top: -2px; }
.clip-t { height: 25px; width: 30px; display: flex; align-items: center; gap: 3px; }

.cells { display: flex; flex-direction: column; padding: 2px 0 0 7px; }
.cell-row { display: flex; align-items: center; height: 21.500px; gap: 3px; color: #4a4d52; }
.cell-row svg { flex: none; }
.cell-row .caret { margin-left: 4px; }

.edit-col { width: 40px; display: flex; flex-direction: column; margin-top: -3px; }
.ed { height: 22px; padding-left: 8px; display: flex; align-items: center; gap: 4px; }
.sigma { font: bold 15px "Liberation Serif", serif; color: #222; width: 15px; text-align: center; }
.sortico { position: relative; width: 30px; height: 32px; margin-bottom: 4px; }
.sortico svg { position: absolute; left: 10px; top: 4px; height: 24px; }
.az { position: absolute; left: 0; font: bold 15px/15px "Liberation Serif", serif; z-index: 1; }
.az.a { top: 0; color: #3a6fb0; } .az.z { top: 15px; left: 2px; color: #b0412a; }

.fbar { height: 22px; margin-top: 2px; display: flex; flex: none; background: #d8dce1; padding: 0 1px; box-sizing: border-box; margin-bottom: 1px; }
.namebox { width: 159px; background: #fff; display: flex; align-items: center; box-sizing: border-box; padding: 0 6px 0 49px; justify-content: space-between; font: 13.500px "Liberation Mono", monospace; color: #333; }
.fx-wrap { width: 77px; background: #f3f4f6; display: flex; align-items: center; position: relative; }
.dot { width: 16px; height: 16px; border-radius: 50%; margin-left: 2px; background: #e4e6e9; border: 1px solid #b4b9bf; box-sizing: border-box; }
.fx { margin-left: auto; margin-right: 5px; font: italic bold 13px "Liberation Serif", serif; color: #333; }
.finput { flex: 1; background: #fff; border-left: 1px solid #c8ccd2; }
.fexp { width: 15px; background: #d9dde3; border: 1px solid #b5bac1; box-sizing: border-box; display: flex; align-items: center; justify-content: center; }

.sheet { height: 520px; display: flex; flex: none; border-top: 1px solid #b8bdc4; box-sizing: border-box; }
.sheet-main { width: 1260px; flex: none; display: flex; flex-direction: column; overflow: hidden; }
.colhead { height: 17px; display: flex; flex: none; background: #e5e8ec; border-bottom: 1px solid #b9bec5; box-sizing: border-box; }
.corner { width: 43px; flex: none; border-right: 1px solid #b9bec5; display: flex; align-items: flex-end; justify-content: flex-end; box-sizing: border-box; padding: 0 4px 2px 0; }
.ch { width: 72px; flex: none; box-sizing: border-box; border-right: 1px solid #c4c8ce; text-align: center; font: 14px/19px "Liberation Mono", monospace; color: #3a3d42; }
.ch.on { background: linear-gradient(#fbe59d, #f6c343); border-right-color: #d9a63e; }
.gridwrap { display: flex; height: 502px; flex: none; }
.rowhead { width: 43px; flex: none; background: #e5e8ec; border-right: 1px solid #b9bec5; box-sizing: border-box; overflow: hidden; }
.rh { height: 18px; box-sizing: border-box; border-top: 1px solid #c4c8ce; font: 14.500px/20px "Liberation Mono", monospace; color: #3a3d42; text-align: center; }
.rh.on { background: linear-gradient(#fbe59d, #f6c343); }
.canvas {
  position: relative; flex: 1; overflow: hidden; background-color: #fff;
  background-image: linear-gradient(to right, #d6d9dd 1px, transparent 1px), linear-gradient(to bottom, #d6d9dd 1px, transparent 1px);
  background-size: 72px 18px; background-position: -1px 0;
}
.canvas > * { position: absolute; }
.wires { left: 0; top: 0; }
.note1 { left: 114px; top: 28px; font: 14.500px/19px "Lato", "Noto Sans CJK SC", sans-serif; color: #111; white-space: pre; }
.note1 span { color: #222; font-size: 14.500px; }
.cell-sel { border: 2px solid #000; box-sizing: border-box; background: transparent; }
.cell-sel i { position: absolute; right: -4px; bottom: -4px; width: 5px; height: 5px; background: #000; border: 1px solid #fff; box-sizing: border-box; }
.layer { width: 171px; height: 49px; box-sizing: border-box; border: 1px solid #5f86b4; border-radius: 10px; background: linear-gradient(#d8e6fd, #a8c6f8); box-shadow: 0 2px 3px rgba(60,80,110,.35); color: #111; font: 14.500px/22px "Lato", "Noto Sans CJK SC", sans-serif; padding-top: 5px; white-space: nowrap; }
.green { height: 42px; box-sizing: border-box; border: 4px solid #fff; border-radius: 8px; background: #9bb255; background-clip: padding-box; box-shadow: 0 2px 3px rgba(70,70,70,.5); color: #eaf1d3; font: 14.500px/27px "Lato", "Noto Sans CJK SC", sans-serif; white-space: pre; }
.red { box-sizing: border-box; border-radius: 6px; background: #c9594c; color: #f5e6e0; font: 14.500px/30px "Lato", "Noto Sans CJK SC", sans-serif; padding-left: 11px; box-shadow: 0 0 0 4px #fff, 0 3px 4px 3px rgba(70,70,70,.4); }
.nic { box-sizing: border-box; border: 1px solid #c0504d; background: linear-gradient(#ffdcd6, #ffa9a1); color: #111; font-size: 14px; padding: 2px 0 0 10px; }
.gw { box-sizing: border-box; border: 2px solid #2f5f92; border-radius: 16px; background: #4a7ebb; color: #f2f6fb; font-size: 14px; padding: 3px 0 0 13px; }
.gw-l { padding-top: 5px; }
.router { box-sizing: border-box; border: 2px solid #2f5f92; border-radius: 37px / 42px; background: #4a7ebb; color: #f2f6fb; font-size: 14.500px; line-height: 18px; padding: 17px 0 0 19px; }

.vscroll { flex: 1; min-width: 0; position: relative; background: #dce0e5; display: flex; flex-direction: column; align-items: center; padding-right: 4px; box-sizing: border-box; border-right: 1px solid #9aa0a8; box-shadow: inset -3px 0 0 #e3e7ec; }
.split-h { width: 15px; height: 7px; margin-top: 1px; background: #eef0f3; border: 1px solid #9ca2aa; box-sizing: border-box; flex: none; }
.arr { width: 0; height: 0; border-left: 5px solid transparent; border-right: 5px solid transparent; flex: none; }
.arr.up { border-bottom: 5px solid #555; margin-top: 6px; }
.arr.down { border-top: 5px solid #555; margin-top: 5px; margin-bottom: 7px; }
.vthumb { margin-top: auto; width: 15px; height: 30px; background: #e8ebef; border: 1px solid #9ca2aa; display: flex; align-items: flex-end; justify-content: center; padding-bottom: 4px; box-sizing: border-box; }
.vthumb span { width: 9px; height: 9px; background: repeating-linear-gradient(#666 0, #666 1px, transparent 1px, transparent 2px); }

.tabs-row { height: 15px; display: flex; flex: none; background: linear-gradient(#e3e6ea, #c9cdd3); border-top: 1px solid #aeb3ba; border-bottom: 1px solid #aeb3ba; box-sizing: content-box; }
.nav { width: 63px; flex: none; display: flex; align-items: center; justify-content: space-around; padding: 0 5px; box-sizing: border-box; }
.nv { width: 0; height: 0; border-top: 4px solid transparent; border-bottom: 4px solid transparent; position: relative; }
.nv.l, .nv.nl { border-right: 5px solid #555; }
.nv.r, .nv.nr { border-left: 5px solid #555; }
.nv.nl::before, .nv.nr::before { content: ""; position: absolute; top: -4px; height: 8px; width: 1px; background: #555; }
.nv.nl::before { left: -2px; }
.nv.nr::before { left: 1px; }
.stab { width: 58px; flex: none; position: relative; text-align: center; font: 12px/15px "Liberation Mono", monospace; color: #444; box-sizing: border-box; }
.stab::after { content: ""; position: absolute; right: -1px; top: 0; width: 1px; height: 15px; background: #8f959c; transform: skewX(-32deg); }
.stab.on { background: #fff; color: #222; width: 59px; }
.newsheet { width: 34px; display: flex; align-items: center; justify-content: center; padding-right: 10px; }
.splitter { margin-left: 486px; width: 6px; height: 15px; flex: none; background: #f2f3f5; border: 1px solid #aeb3ba; box-sizing: border-box; }
.hscroll { flex: 1; display: flex; align-items: center; }
.harr { width: 0; height: 0; border-top: 5px solid transparent; border-bottom: 5px solid transparent; flex: none; }
.harr.l { border-right: 5px solid #444; margin-left: 5px; }
.harr.r { border-left: 5px solid #444; margin-left: 83px; }
.hthumb { width: 301px; height: 14px; flex: none; margin-left: 84px; background: linear-gradient(#f2f3f6, #d8dce1); border: 1px solid #9ca2aa; border-radius: 2px; box-sizing: border-box; display: flex; align-items: center; justify-content: center; }
.hthumb span { width: 9px; height: 8px; background: repeating-linear-gradient(to right, #666 0, #666 1px, transparent 1px, transparent 2px); }
.hbox { width: 7px; height: 15px; flex: none; margin-left: 6px; background: #f2f3f5; border: 1px solid #aeb3ba; box-sizing: border-box; }

.status { height: 20px; display: flex; align-items: center; flex: none; background: linear-gradient(#eceef1, #c6cad1); border-bottom: 1px solid #555e6a; }
.ready { width: 41px; text-align: center; border-right: 1px solid #b2b6bc; line-height: 20px; }
.views { margin-left: auto; display: flex; align-items: center; width: 245px; height: 20px; }
.vsep { width: 1px; height: 18px; background: #a7acb3; margin-right: 3px; }
.vb { width: 19px; height: 19px; display: flex; align-items: center; justify-content: center; box-sizing: border-box; }
.vb.on { background: linear-gradient(#fde7a8, #fbcf6a); border: 1px solid #d9a63e; border-radius: 2px; }
.zoom { margin-left: 8px; font-family: "Noto Sans", sans-serif; font-size: 12px; color: #444; }

.taskbar { height: 30px; flex: none; display: flex; align-items: center; background: linear-gradient(90deg, #8ba3b8 0, #97b3cd 15%, #a5c0dd 60%, #9fbad8 100%); position: relative; }
.orbcell { width: 54px; height: 30px; display: flex; justify-content: center; align-items: flex-start; flex: none; }
.orbcell svg { margin-top: -5px; flex: none; }
.tb-ic { display: flex; align-items: center; justify-content: center; flex: none; }
.w43 { width: 43px; }
.grip { width: 20px; height: 24px; flex: none; background-image: radial-gradient(#444 1px, transparent 1.300px); background-size: 4px 4px; background-position: center; opacity: .7; }
.ie { width: 44px; margin-left: 3px; }
.tb-btns { display: flex; gap: 3px; margin-left: 2px; }
.tb-btn { width: 43px; height: 30px; box-sizing: border-box; border: 1px solid rgba(60,90,120,.55); border-radius: 3px; background: linear-gradient(rgba(255,255,255,.35), rgba(255,255,255,.12)); display: flex; align-items: center; justify-content: center; }
.tb-btn.plain { border-color: transparent; background: none; }
.cmd { width: 18px; height: 17px; background: #111; border-top: 3px solid #dde; box-sizing: border-box; color: #fff; font: bold 7px/14px "Liberation Mono", monospace; text-align: center; }
.tray { margin-left: auto; display: flex; align-items: center; height: 30px; }
.g2 { width: 16px; margin-right: 3px; }
.sogou { width: 19px; height: 19px; background: #e8552a; border-radius: 4px; color: #fff; font: bold 17px/19px "Liberation Sans", sans-serif; text-align: center; margin-right: 10px; }
.tri { width: 0; height: 0; border-left: 5px solid transparent; border-right: 5px solid transparent; border-bottom: 5px solid #fff; margin-right: 7px; }
.ti { width: 24px; display: flex; justify-content: center; }
.clock { width: 59px; text-align: center; font: 12px "Noto Sans", sans-serif; color: #eaf0f6; }
.desk { width: 14px; height: 30px; background: linear-gradient(#88a, #667); opacity: .5; border-left: 1px solid #567; }

.topline { position: absolute; left: 722px; top: 0; width: 520px; height: 3px; background: #000; }
.mini-play { position: absolute; left: 1238px; top: 7px; width: 110px; height: 21px; box-sizing: border-box; background: #f7f8f9; border: 1px solid #d6d8da; border-radius: 2px; display: flex; align-items: center; padding: 0 5px 0 6px; color: #555; }
.mini-play span { margin-left: 2px; width: 66px; }
.mp-sep { width: 1px; height: 19px; background: #cfd2d5; margin-right: 5px; }
.ime { position: absolute; left: 1176px; top: 717px; width: 147px; height: 21px; background: #fff; display: flex; align-items: center; justify-content: space-between; padding: 0 7px 0 1px; box-sizing: border-box; }
.zh { color: #2a7fd0; font: bold 15px "Noto Sans CJK SC", sans-serif; }
.pt { color: #2a7fd0; font: 14px/14px "Liberation Sans", sans-serif; }
.bili { position: absolute; left: 1272px; top: 615px; width: 56px; height: 54px; }
.wm { position: absolute; left: 1122px; top: 738px; font: 16.200px/21px "Liberation Sans", sans-serif; color: rgba(235,240,245,.72); white-space: nowrap; }
</style>
